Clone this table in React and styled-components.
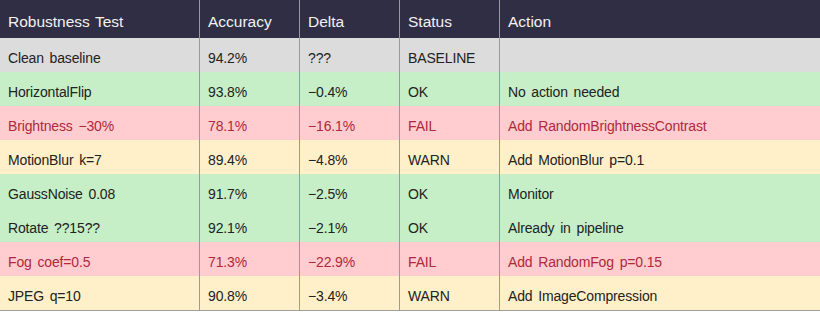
import React from "react";
import styled, { createGlobalStyle } from "styled-components";

const Global = createGlobalStyle`
  html, body { margin: 0; padding: 0; background: #ffffff; }
  body { font-family: "Liberation Sans", Arial, sans-serif; }
`;

const Table = styled.div`
  width: 820px;
  display: flex;
  flex-direction: column;
`;

const Row = styled.div`
  display: grid;
  grid-template-columns: 200px 100px 100px 100px 1fr;
  height: ${(p) => (p.$header ? 38 : 34)}px;
  background: ${(p) => p.$bg};
  color: ${(p) => p.$fg};
  border-bottom: ${(p) => (p.$last ? "1px solid #a0a0a0" : "none")};
`;

const Cell = styled.div`
  box-sizing: border-box;
  padding: ${(p) => (p.$header ? "12px 8px 0" : "10px 8px 0")};
  font-size: ${(p) => (p.$header ? 15.5 : 14)}px;
  line-height: 20px;
  word-spacing: ${(p) => (p.$header ? 1 : 2)}px;
  letter-spacing: ${(p) => (p.$header ? 0 : -0.15)}px;
  white-space: nowrap;
  overflow: hidden;
  border-left: ${(p) => (p.$first ? "none" : "1px solid #9a9a9a")};
  margin-left: ${(p) => (p.$first ? 0 : -1)}px;
`;

const palette = {
  header: { bg: "#302e44", fg: "#f2f2f2" },
  BASELINE: { bg: "#dcdcdc", fg: "#222222" },
  OK: { bg: "#c6efc7", fg: "#222222" },
  FAIL: { bg: "#ffcdd0", fg: "#b0283c" },
  WARN: { bg: "#fff0c9", fg: "#222222" },
};

const rows = [
  ["Clean baseline", "94.2%", "???", "BASELINE", ""],
  ["HorizontalFlip", "93.8%", "\u22120.4%", "OK", "No action needed"],
  ["Brightness \u221230%", "78.1%", "\u221216.1%", "FAIL", "Add RandomBrightnessContrast"],
  ["MotionBlur k=7", "89.4%", "\u22124.8%", "WARN", "Add MotionBlur p=0.1"],
  ["GaussNoise 0.08", "91.7%", "\u22122.5%", "OK", "Monitor"],
  ["Rotate ??15??", "92.1%", "\u22122.1%", "OK", "Already in pipeline"],
  ["Fog coef=0.5", "71.3%", "\u221222.9%", "FAIL", "Add RandomFog p=0.15"],
  ["JPEG q=10", "90.8%", "\u22123.4%", "WARN", "Add ImageCompression"],
];

const headers = ["Robustness Test", "Accuracy", "Delta", "Status", "Action"];

export default function App() {
  return (
    <>
      <Global />
      <Table>
        <Row $header $bg={palette.header.bg} $fg={palette.header.fg}>
          {headers.map((h, i) => (
            <Cell key={h} $header $first={i === 0}>
              {h}
            </Cell>
          ))}
        </Row>
        {rows.map((r, ri) => {
          const c = palette[r[3]];
          return (
            <Row key={ri} $bg={c.bg} $fg={c.fg} $last={ri === rows.length - 1}>
              {r.map((v, i) => (
                <Cell key={i} $first={i === 0}>
                  {v}
                </Cell>
              ))}
            </Row>
          );
        })}
      </Table>
    </>
  );
}
